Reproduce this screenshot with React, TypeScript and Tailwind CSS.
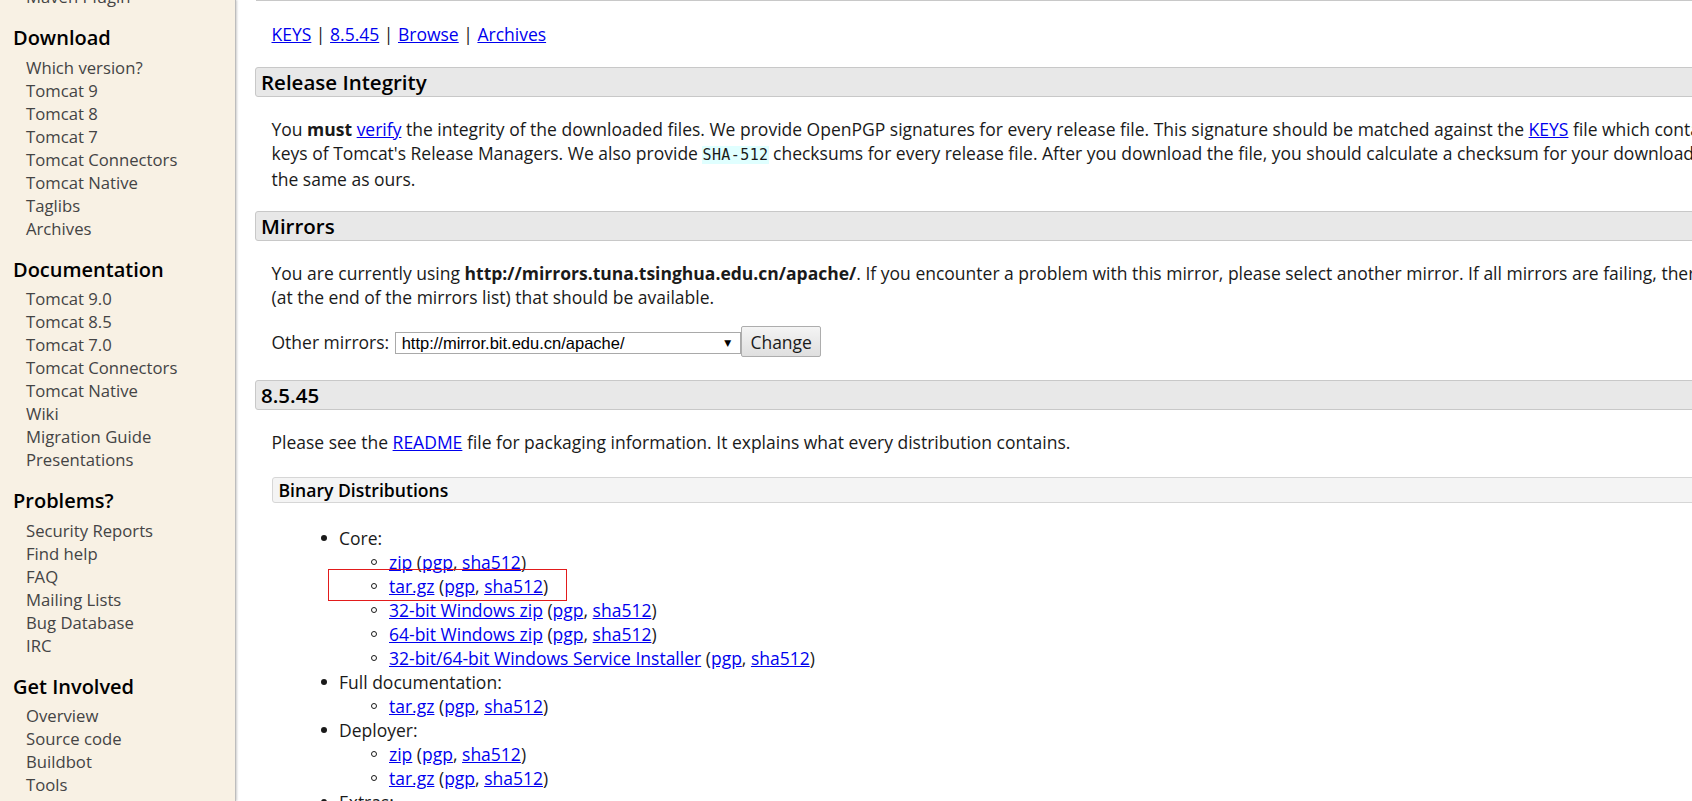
import React from "react";

function A({ children }: { children: React.ReactNode }) {
  return (
    <a href="#" className="text-[#0000ee] underline">
      {children}
    </a>
  );
}

function Code({ children }: { children: React.ReactNode }) {
  return (
    <span className="font-['DejaVu_Sans_Mono',monospace] text-[15px] tracking-[0.4px] bg-[#e0ffff]">
      {children}
    </span>
  );
}

function H3({ children, className }: { children: React.ReactNode; className: string }) {
  return (
    <div
      className={`h-[30px] border border-[#c8c8c8] bg-[#e8e8e8] rounded-[3px] pl-[5px] text-[20.5px] leading-[28px] font-semibold text-black ${className}`}
    >
      {children}
    </div>
  );
}

function Links({ name }: { name: string }) {
  return (
    <>
      <A>{name}</A> (<A>pgp</A>, <A>sha512</A>)
    </>
  );
}

function Item1({ children }: { children: React.ReactNode }) {
  return (
    <div className="flex ml-[54px] h-[24px]">
      <div className="w-[30px] shrink-0 flex justify-center pt-[9px]">
        <div className="w-[6px] h-[6px] rounded-full bg-[#1a1a1a]" />
      </div>
      <div className="whitespace-nowrap">{children}</div>
    </div>
  );
}

function Item2({ children }: { children: React.ReactNode }) {
  return (
    <div className="flex ml-[104px] h-[24px]">
      <div className="w-[30px] shrink-0 flex justify-center pt-[9px]">
        <div className="w-[6px] h-[6px] rounded-full border border-[#1a1a1a]" />
      </div>
      <div className="whitespace-nowrap">{children}</div>
    </div>
  );
}

const groups = [
  {
    heading: "Download",
    items: [
      "Which version?",
      "Tomcat 9",
      "Tomcat 8",
      "Tomcat 7",
      "Tomcat Connectors",
      "Tomcat Native",
      "Taglibs",
      "Archives",
    ],
  },
  {
    heading: "Documentation",
    items: [
      "Tomcat 9.0",
      "Tomcat 8.5",
      "Tomcat 7.0",
      "Tomcat Connectors",
      "Tomcat Native",
      "Wiki",
      "Migration Guide",
      "Presentations",
    ],
  },
  {
    heading: "Problems?",
    items: ["Security Reports", "Find help", "FAQ", "Mailing Lists", "Bug Database", "IRC"],
  },
  {
    heading: "Get Involved",
    items: ["Overview", "Source code", "Buildbot", "Tools"],
  },
];

export default function App() {
  return (
    <div className="relative w-[1692px] h-[801px] overflow-hidden bg-white flex font-['Open_Sans',sans-serif]">
      <aside className="relative z-10 w-[236px] shrink-0 h-full bg-[#f8f1e4] border-r border-[#bdbdbd] shadow-[1px_0_2px_rgba(0,0,0,0.2)] overflow-hidden">
        <div className="-mt-[15px]">
          <div className="pl-[26px] text-[16.7px] leading-[23px] text-[#444]">Maven Plugin</div>
          {groups.map((g) => (
            <div key={g.heading}>
              <div className="mt-[16px] mb-[3.5px] pl-[13px] text-[20px] leading-[28px] font-semibold text-black">
                {g.heading}
              </div>
              {g.items.map((it) => (
                <div key={it} className="pl-[26px] text-[16.7px] leading-[23px] text-[#444] whitespace-nowrap">
                  {it}
                </div>
              ))}
            </div>
          ))}
        </div>
      </aside>

      <main className="w-[1600px] shrink-0 pl-[19px] text-[17.5px] leading-[24px] text-[#1a1a1a]">
        <div className="ml-px h-px bg-[#c8c8c8]" />
        <div className="mt-[21px] pl-[16.5px] whitespace-nowrap">
          <A>KEYS</A> | <A>8.5.45</A> | <A>Browse</A> | <A>Archives</A>
        </div>

        <H3 className="mt-[21px]">Release Integrity</H3>
        <p className="mt-[20px] pl-[16.5px] whitespace-nowrap">
          You <b className="font-bold">must</b> <A>verify</A> the integrity of the downloaded files. We provide OpenPGP
          signatures for every release file. This signature should be matched against the <A>KEYS</A> file which
          contains the OpenPGP
          <br />
          keys of Tomcat's Release Managers. We also provide <Code>SHA-512</Code> checksums for every release file.
          After you download the file, you should calculate a checksum for your download, and make sure it is
          <br />
          the same as ours.
        </p>

        <H3 className="mt-[20px]">Mirrors</H3>
        <p className="mt-[20px] pl-[16.5px] whitespace-nowrap">
          You are currently using <b className="font-bold">http://mirrors.tuna.tsinghua.edu.cn/apache/</b>. If you
          encounter a problem with this mirror, please select another mirror. If all mirrors are failing, there are{" "}
          <i>backup</i> mirrors
          <br />
          (at the end of the mirrors list) that should be available.
        </p>

        <div className="mt-[17px] pl-[16.5px] flex items-baseline h-[31px]">
          <span className="mr-[6px] whitespace-nowrap">Other mirrors:</span>
          <div className="inline-flex items-center justify-between w-[346px] h-[22px] border border-[#a9a9a9] bg-white pl-[5.5px] pr-[9px] font-['Liberation_Sans',Arial,sans-serif] text-[16.5px] leading-[20px] text-black">
            <span>http://mirror.bit.edu.cn/apache/</span>
            <span className="text-[9px] leading-[20px] font-['DejaVu_Sans',sans-serif]">▼</span>
          </div>
          <button className="h-[31px] w-[80px] border border-[#adadad] rounded-[2px] bg-gradient-to-b from-[#f4f4f4] to-[#dfdfdf] text-[17.5px] leading-[24px] text-[#1a1a1a] font-['Open_Sans',sans-serif]">
            Change
          </button>
        </div>

        <H3 className="mt-[23px]">8.5.45</H3>
        <p className="mt-[20px] pl-[16.5px] whitespace-nowrap">
          Please see the <A>README</A> file for packaging information. It explains what every distribution contains.
        </p>

        <div className="mt-[23px] ml-[16.5px] h-[26px] border border-[#d6d6d6] bg-[#f4f4f4] rounded-[3px] pl-[6px] text-[17.6px] leading-[24px] font-semibold text-black">
          Binary Distributions
        </div>

        <div className="mt-[23px]">
          <Item1>Core:</Item1>
          <Item2>
            <Links name="zip" />
          </Item2>
          <Item2>
            <Links name="tar.gz" />
          </Item2>
          <Item2>
            <Links name="32-bit Windows zip" />
          </Item2>
          <Item2>
            <Links name="64-bit Windows zip" />
          </Item2>
          <Item2>
            <Links name="32-bit/64-bit Windows Service Installer" />
          </Item2>
          <Item1>Full documentation:</Item1>
          <Item2>
            <Links name="tar.gz" />
          </Item2>
          <Item1>Deployer:</Item1>
          <Item2>
            <Links name="zip" />
          </Item2>
          <Item2>
            <Links name="tar.gz" />
          </Item2>
          <Item1>Extras:</Item1>
        </div>
      </main>

      <div className="absolute left-[8px] top-[95px] w-[116px] h-[35px] border border-[#e21b1b] pointer-events-none" />
      <div className="absolute left-[328px] top-[569px] w-[239px] h-[32px] border border-[#e21b1b] pointer-events-none" />
    </div>
  );
}
